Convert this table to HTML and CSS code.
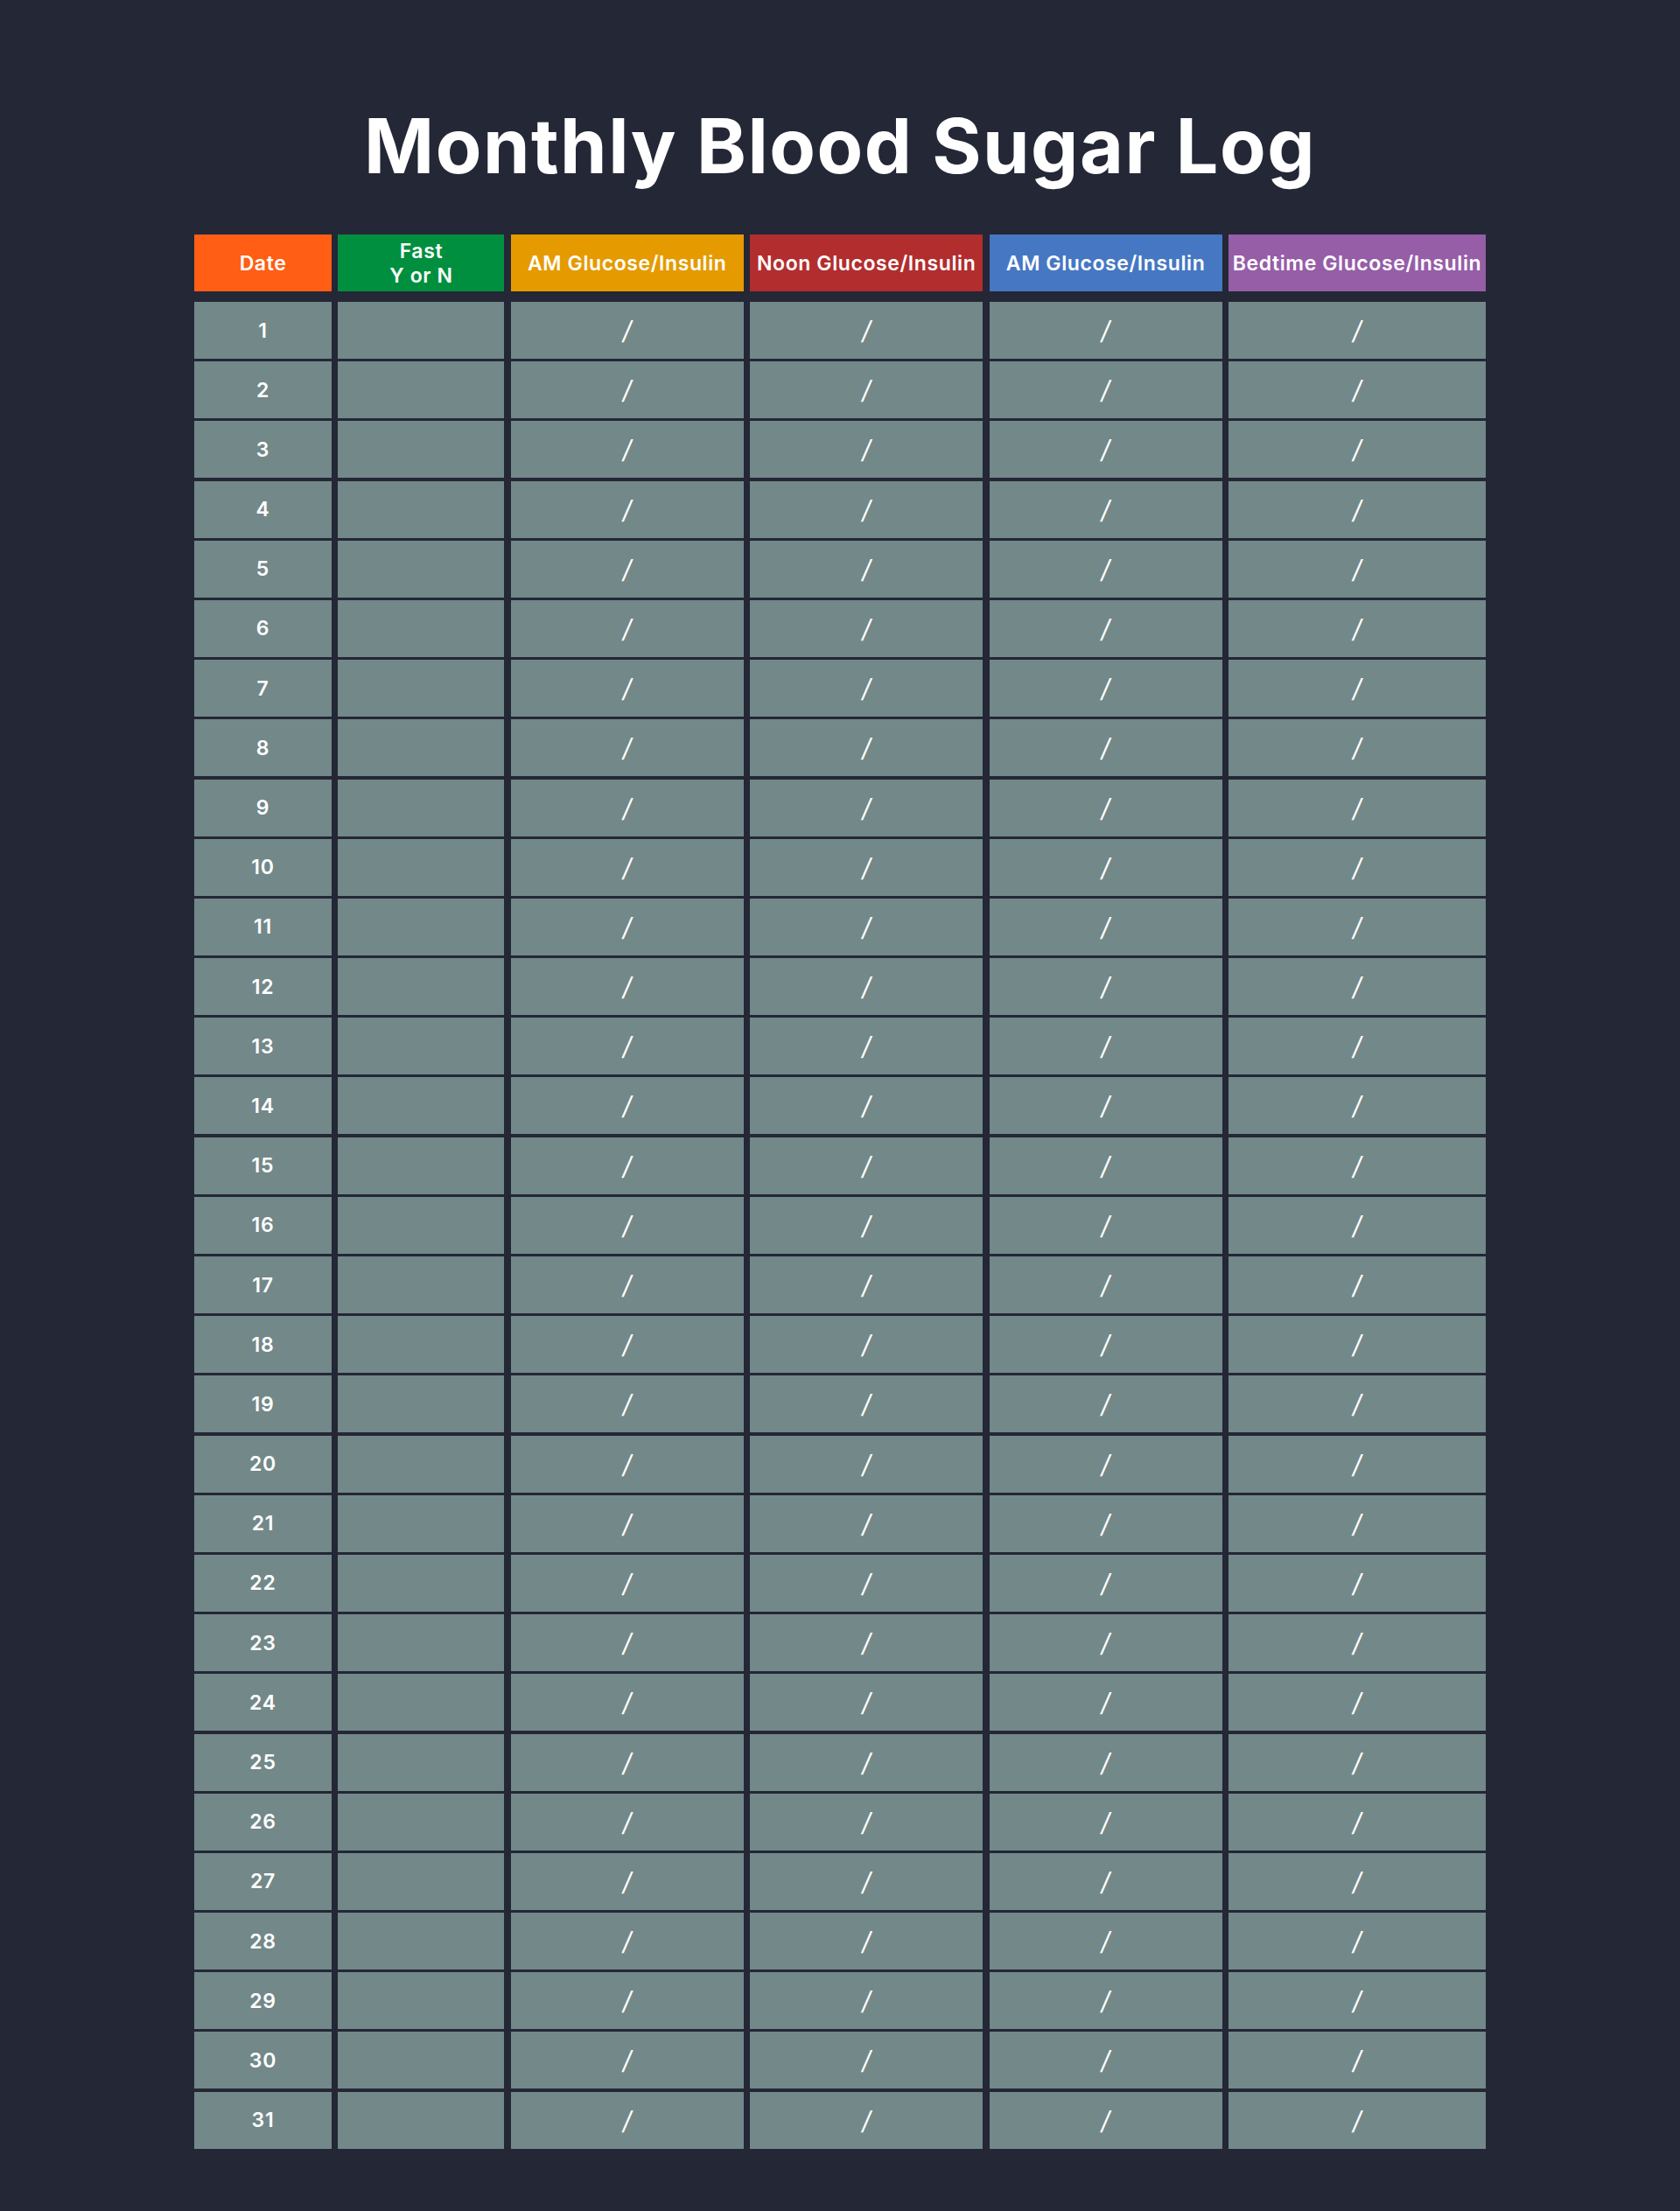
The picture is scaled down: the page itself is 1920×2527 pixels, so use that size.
FILE: index.html
```html
<!DOCTYPE html>
<html lang="en">

<head>
    <meta charset="UTF-8">
    <meta name="viewport" content="width=device-width, initial-scale=1.0">
    <title>Monthly Blood Sugar Log</title>
    <link rel="stylesheet" href="styles.css">
</head>

<body>
    <div class="page">
        <h1>Monthly Blood Sugar Log</h1>

        <div class="log">
            <div class="log-head">
                <div class="head date">Date</div>
                <div class="head fast">Fast<br>Y or N</div>
                <div class="head am">AM Glucose/Insulin</div>
                <div class="head noon">Noon Glucose/Insulin</div>
                <div class="head pm">AM Glucose/Insulin</div>
                <div class="head bed">Bedtime Glucose/Insulin</div>
            </div>
            <div class="log-body" id="logBody"></div>
        </div>
    </div>

    <script>
        const body = document.getElementById('logBody');
        for (let day = 1; day <= 31; day++) {
            body.innerHTML += `
                <div class="cell day">${day}</div>
                <div class="cell"></div>
                <div class="cell slash">/</div>
                <div class="cell slash">/</div>
                <div class="cell slash">/</div>
                <div class="cell slash">/</div>`;
        }
    </script>
</body>

</html>
```

FILE: styles.css
```css
body {
    margin: 0;
    background: #242736;
    font-family: Inter, "Open Sans", sans-serif;
    color: #fff;
}

.page {
    width: 1476px;
    margin: 0 auto;
    padding: 124px 0 73px;
    border-bottom: 1px solid #3a3e4d;
}

h1 {
    margin: 0 0 58px;
    font-size: 86px;
    line-height: 1;
    font-weight: 700;
    letter-spacing: 1.5px;
    text-align: center;
}

.log-head,
.log-body {
    display: grid;
    grid-template-columns: 157px 190px 266px 266px 266px 1fr;
    column-gap: 7.4px;
}

.log-head {
    margin-bottom: 12px;
}

.log-body {
    grid-auto-rows: 65px;
    row-gap: 3.2px;
}

.head {
    height: 65px;
    display: flex;
    align-items: center;
    justify-content: center;
    text-align: center;
    font-size: 23px;
    font-weight: 600;
    letter-spacing: 0.6px;
    line-height: 28px;
    white-space: nowrap;
}

.date { background: #ff5e14; }
.fast { background: #008f3e; }
.am { background: #e59a00; }
.noon { background: #b22d2e; }
.pm { background: #4677c3; }
.bed { background: #955ea7; }

.cell {
    background: #738889;
    display: flex;
    align-items: center;
    justify-content: center;
}

.day {
    font-size: 23px;
    font-weight: 600;
    letter-spacing: 0.8px;
}

.slash {
    font-size: 29px;
    font-weight: 400;
    font-style: italic;
}
```
